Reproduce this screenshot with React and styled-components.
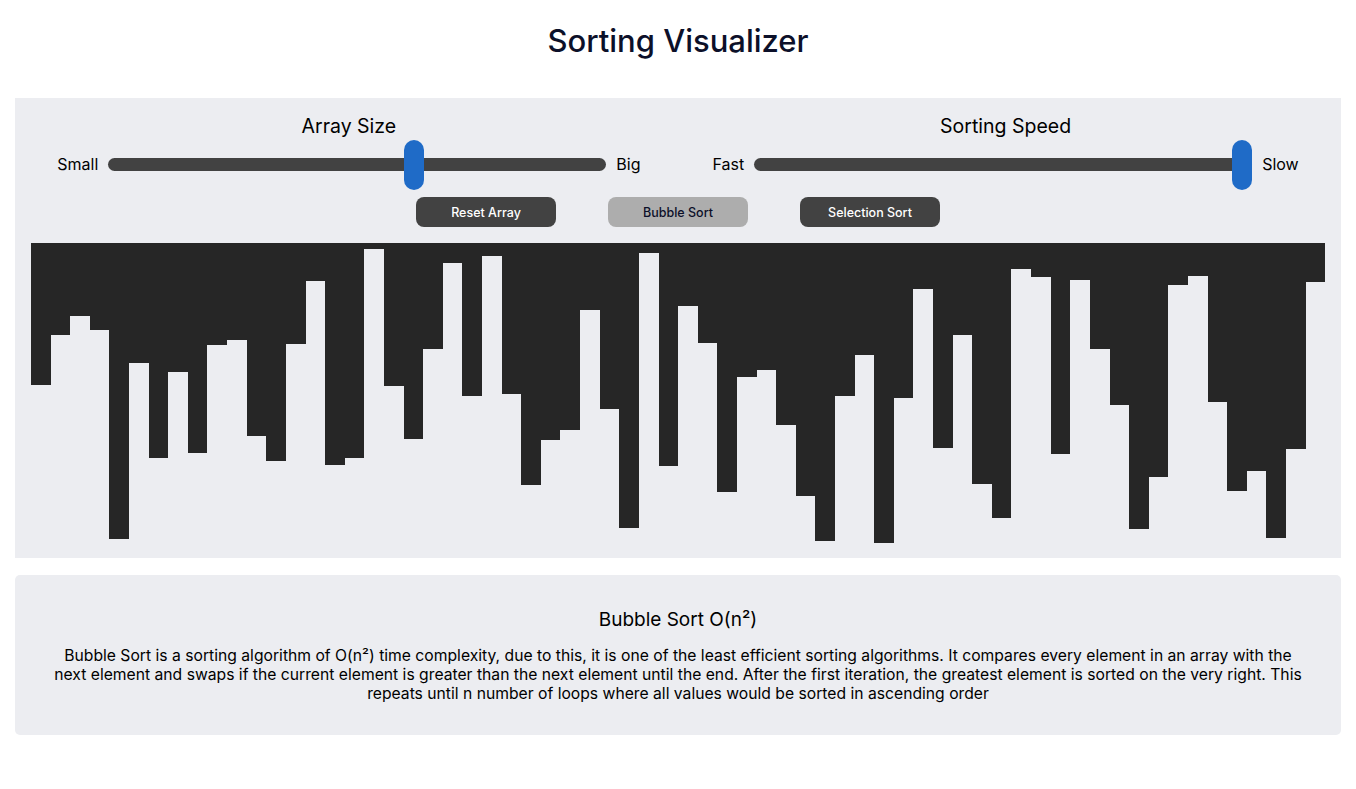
import React from "react";
import styled, { createGlobalStyle } from "styled-components";

const GlobalStyle = createGlobalStyle`
  html, body { margin: 0; padding: 0; background: #ffffff; }
  body { font-family: Inter, "Noto Sans", sans-serif; color: #000; }
`;

const Page = styled.main`
  padding: 0 15px;
`;

const Header = styled.header`
  height: 98px;
  box-sizing: border-box;
  padding-top: 22px;
  text-align: center;
`;

const Title = styled.h1`
  margin: 0;
  font-size: 31px;
  line-height: 38px;
  font-weight: 500;
  color: #0c1029;
`;

const Panel = styled.section`
  background: #ecedf1;
  padding: 16px 16px 15px;
  display: flex;
  flex-direction: column;
  align-items: center;
`;

const Controls = styled.div`
  display: flex;
  justify-content: center;
  gap: 72px;
  width: 100%;
`;

const Group = styled.div`
  display: flex;
  flex-direction: column;
  align-items: center;
`;

const GroupTitle = styled.h2`
  margin: 0 0 1px;
  font-size: 19.5px;
  line-height: 24px;
  font-weight: 400;
  color: #000;
`;

const SliderRow = styled.div`
  display: flex;
  align-items: center;
  height: 50px;
  gap: 10px;
`;

const SideLabel = styled.span`
  font-size: 16px;
  color: #000;
`;

const Track = styled.div`
  position: relative;
  width: ${(p) => p.$width}px;
  height: 13px;
  border-radius: 7px;
  background: #424242;
`;

const Thumb = styled.div`
  position: absolute;
  top: -18px;
  width: 20px;
  height: 50px;
  border-radius: 10px;
  background: #1f6bc7;
`;

const Buttons = styled.div`
  display: flex;
  gap: 52px;
  margin-top: 8px;
`;

const Button = styled.button`
  width: 140px;
  height: 30px;
  border: none;
  border-radius: 8px;
  font-family: inherit;
  font-size: 12.5px;
  font-weight: 500;
  cursor: pointer;
  background: ${(p) => (p.$active ? "#adadad" : "#424242")};
  color: ${(p) => (p.$active ? "#0c1029" : "#ffffff")};
`;

const Bars = styled.div`
  margin-top: 16px;
  width: 100%;
  height: 300px;
  display: flex;
  align-items: flex-start;
`;

const Bar = styled.div`
  flex: 1;
  background: #262626;
`;

const InfoPanel = styled.section`
  margin-top: 17px;
  background: #ecedf1;
  border-radius: 5px;
  height: 160px;
  box-sizing: border-box;
  padding: 33px 20px 0;
  text-align: center;
`;

const InfoTitle = styled.h3`
  margin: 0 0 15px;
  font-size: 19px;
  line-height: 23px;
  font-weight: 400;
  color: #000;
`;

const InfoText = styled.p`
  margin: 0;
  font-size: 15.7px;
  line-height: 19px;
  color: #000;
`;

const heights = [
  142, 92, 73, 87, 296, 120, 215, 129, 210, 102, 97, 193, 218, 101, 38, 222,
  215, 6, 143, 196, 106, 20, 153, 13, 151, 242, 197, 187, 67, 166, 285, 10,
  223, 63, 100, 249, 134, 127, 182, 253, 298, 153, 112, 300, 155, 46, 205, 92,
  241, 275, 26, 34, 211, 37, 106, 162, 286, 234, 42, 33, 159, 248, 228, 295,
  206, 39,
];

function Slider({ left, right, pos }) {
  const width = 498;
  return (
    <SliderRow>
      <SideLabel>{left}</SideLabel>
      <Track $width={width}>
        <Thumb style={{ left: Math.round(pos * (width - 20)) }} />
      </Track>
      <SideLabel>{right}</SideLabel>
    </SliderRow>
  );
}

export default function App() {
  return (
    <>
      <GlobalStyle />
      <Page>
        <Header>
          <Title>Sorting Visualizer</Title>
        </Header>
        <Panel>
          <Controls>
            <Group>
              <GroupTitle>Array Size</GroupTitle>
              <Slider left="Small" right="Big" pos={0.62} />
            </Group>
            <Group>
              <GroupTitle>Sorting Speed</GroupTitle>
              <Slider left="Fast" right="Slow" pos={1} />
            </Group>
          </Controls>
          <Buttons>
            <Button>Reset Array</Button>
            <Button $active>Bubble Sort</Button>
            <Button>Selection Sort</Button>
          </Buttons>
          <Bars>
            {heights.map((h, i) => (
              <Bar key={i} style={{ height: h }} />
            ))}
          </Bars>
        </Panel>
        <InfoPanel>
          <InfoTitle>Bubble Sort O(n²)</InfoTitle>
          <InfoText>
            Bubble Sort is a sorting algorithm of O(n²) time complexity, due to
            this, it is one of the least efficient sorting algorithms. It
            compares every element in an array with the
            <br />
            next element and swaps if the current element is greater than the
            next element until the end. After the first iteration, the greatest
            element is sorted on the very right. This
            <br />
            repeats until n number of loops where all values would be sorted in
            ascending order
          </InfoText>
        </InfoPanel>
      </Page>
    </>
  );
}
